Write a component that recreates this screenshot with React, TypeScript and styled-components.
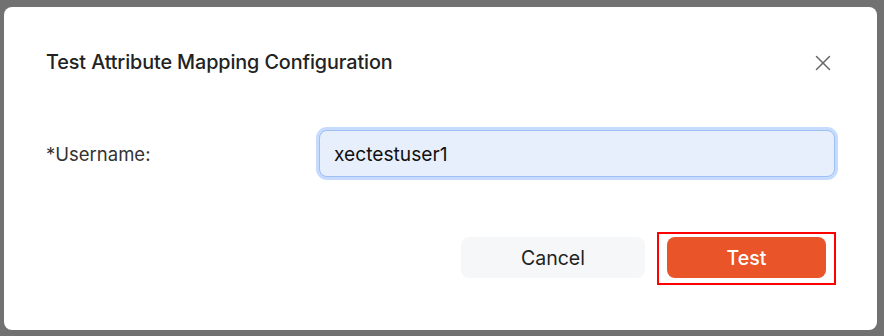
import React from 'react';
import styled, { createGlobalStyle } from 'styled-components';
import { X } from 'lucide-react';

const GlobalStyle = createGlobalStyle`
	html, body {
		margin: 0;
		padding: 0;
		background: #717171;
	}
	body {
		font-family: Inter, 'Noto Sans', 'Liberation Sans', sans-serif;
	}
`;

const App = () => {
	return (
		<>
			<GlobalStyle />
			<StyledBackdrop>
				<StyledModal>
					<StyledHeader>
						<StyledTitle>Test Attribute Mapping Configuration</StyledTitle>
						<StyledClose aria-label="close">
							<X size={26} strokeWidth={1.4} />
						</StyledClose>
					</StyledHeader>

					<StyledRow>
						<StyledLabel>*Username:</StyledLabel>
						<StyledInput defaultValue="xectestuser1" />
					</StyledRow>

					<StyledFooter>
						<StyledButton>Cancel</StyledButton>
						<StyledHighlight>
							<StyledButton $primary>Test</StyledButton>
						</StyledHighlight>
					</StyledFooter>
				</StyledModal>
			</StyledBackdrop>
		</>
	);
};

const StyledBackdrop = styled.div`
	width: 884px;
	height: 336px;
	box-sizing: border-box;
	padding: 7px 7px 6px 4px;
	display: flex;
	background: #717171;
`;

const StyledModal = styled.div`
	flex: 1;
	display: flex;
	flex-direction: column;
	background: #ffffff;
	border-radius: 8px;
	padding: 0 42px;
`;

const StyledHeader = styled.div`
	display: flex;
	align-items: center;
	justify-content: space-between;
	padding-top: 42px;
	height: 26px;
`;

const StyledTitle = styled.h2`
	margin: 0;
	font-size: 19.8px;
	font-weight: 500;
	color: #222222;
	line-height: 28px;
	letter-spacing: -0.1px;
`;

const StyledClose = styled.button`
	display: flex;
	align-items: center;
	justify-content: center;
	padding: 0;
	margin-right: -1px;
	margin-top: 1px;
	border: none;
	background: transparent;
	color: #6b6b6b;
	cursor: pointer;
`;

const StyledRow = styled.div`
	display: grid;
	grid-template-columns: 273px 1fr;
	align-items: center;
	margin-top: 55px;
`;

const StyledLabel = styled.label`
	font-size: 18.5px;
	font-weight: 400;
	color: #333333;
`;

const StyledInput = styled.input`
	box-sizing: border-box;
	height: 47px;
	padding: 0 14px;
	font-family: inherit;
	font-size: 19.2px;
	color: #111111;
	background: #e8effc;
	border: 1px solid #9ebff3;
	border-radius: 8px;
	box-shadow: 0 0 0 3px #c6dbfd;
	outline: none;
`;

const StyledFooter = styled.div`
	display: flex;
	justify-content: flex-end;
	align-items: flex-start;
	gap: 12px;
	margin-top: 55px;
	margin-right: -1px;
`;

const StyledHighlight = styled.div`
	display: flex;
	padding: 3px 8px 5px;
	border: 2px solid #ff0000;
`;

const StyledButton = styled.button<{ $primary?: boolean }>`
	height: 41px;
	width: ${({ $primary }) => ($primary ? '159px' : '184px')};
	margin-top: ${({ $primary }) => ($primary ? '0' : '5px')};
	border: none;
	border-radius: 8px;
	font-family: inherit;
	font-size: 19.5px;
	font-weight: ${({ $primary }) => ($primary ? 500 : 400)};
	color: ${({ $primary }) => ($primary ? '#ffffff' : '#222222')};
	background: ${({ $primary }) => ($primary ? '#e95428' : '#f6f7f9')};
	cursor: pointer;
`;

export default App;
